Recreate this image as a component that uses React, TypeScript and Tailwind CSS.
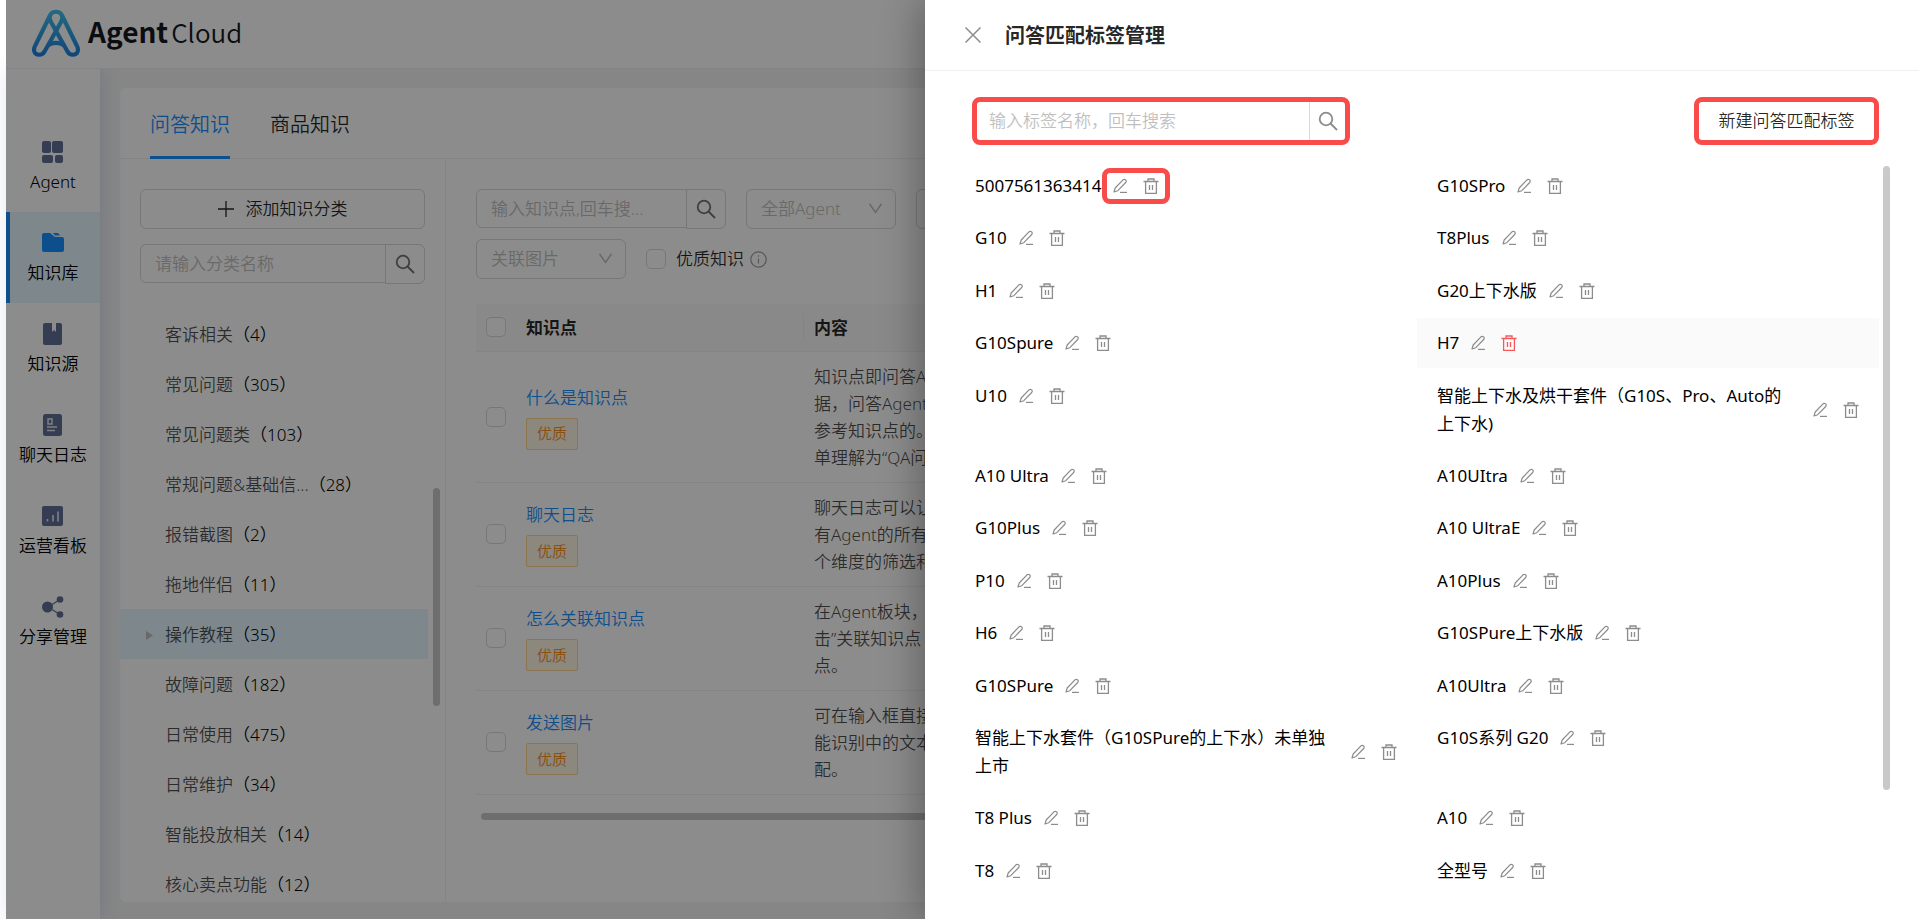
import type { ReactNode } from "react";

const navItems = [
  { label: "Agent", icon: "grid" },
  { label: "知识库", icon: "folder", active: true },
  { label: "知识源", icon: "book" },
  { label: "聊天日志", icon: "log" },
  { label: "运营看板", icon: "chart" },
  { label: "分享管理", icon: "share" },
];

const categories = [
  { name: "客诉相关", count: 4 },
  { name: "常见问题", count: 305 },
  { name: "常见问题类", count: 103 },
  { name: "常规问题&基础信...", count: 28 },
  { name: "报错截图", count: 2 },
  { name: "拖地伴侣", count: 11 },
  { name: "操作教程", count: 35, active: true },
  { name: "故障问题", count: 182 },
  { name: "日常使用", count: 475 },
  { name: "日常维护", count: 34 },
  { name: "智能投放相关", count: 14 },
  { name: "核心卖点功能", count: 12 },
];

const knowledge = [
  { title: "什么是知识点", lines: ["知识点即问答Agent", "据，问答Agent", "参考知识点的。", "单理解为“QA问答"] },
  { title: "聊天日志", lines: ["聊天日志可以让", "有Agent的所有", "个维度的筛选和"] },
  { title: "怎么关联知识点", lines: ["在Agent板块，", "击”关联知识点", "点。"] },
  { title: "发送图片", lines: ["可在输入框直接", "能识别中的文本", "配。"] },
];

// \u2060 keeps "上下水" on one line
const tags = [
  "5007561363414", "G10SPro",
  "G10", "T8Plus",
  "H1", "G20上下水版",
  "G10Spure", "H7",
  "U10", "智能上下水及烘干套件（G10S、Pro、Auto的上\u2060下\u2060水)",
  "A10 Ultra", "A10UItra",
  "G10Plus", "A10 UltraE",
  "P10", "A10Plus",
  "H6", "G10SPure上下水版",
  "G10SPure", "A10Ultra",
  "智能上下水套件（G10SPure的上下水）未单独上市", "G10S系列 G20",
  "T8 Plus", "A10",
  "T8", "全型号",
];

function Logo() {
  return (
    <svg width="50" height="48" viewBox="0 0 50 48" fill="none" stroke="url(#logo)" strokeWidth="4.2" strokeLinejoin="round">
      <defs>
        <linearGradient id="logo" x1="25" y1="0" x2="25" y2="48" gradientUnits="userSpaceOnUse">
          <stop stopColor="#45c3e8" />
          <stop offset="1" stopColor="#1b7ee0" />
        </linearGradient>
      </defs>
      <path d="M19 6.5C21 1.5 29 1.5 31 6.5C32 9 31 11 30 13L17.500 35.500L13.500 42.500C11 47 5 46.500 3.500 43C2.500 40.500 3 38.500 4.500 36Z" />
      <path d="M31 6.500L45.500 36C47 38.500 47.500 40.500 46.500 43C45 46.500 39 47 36.500 42.500L20 13C19 11 18 9 19 6.500" />
      <path d="M17 36.500C21 33 29 33 33 36.500" />
    </svg>
  );
}

function NavIcon({ name }: { name: string }) {
  const shapes: Record<string, ReactNode> = {
    grid: (
      <>
        <rect x="0" y="0" width="9" height="12" rx="2" />
        <rect x="10" y="0" width="11" height="12" rx="2" />
        <rect x="0" y="14" width="11" height="8" rx="2" />
        <rect x="13" y="14" width="8" height="8" rx="2" />
      </>
    ),
    folder: (
      <>
        <path d="M0 3a2 2 0 0 1 2-2h6l5 4h7a2 2 0 0 1 2 2v11a2 2 0 0 1-2 2H2a2 2 0 0 1-2-2z" />
        <path d="M11 1h5l2 2.500h-5z" />
      </>
    ),
    book: <path d="M3 0h7v9l2-2 2 2V0h4a2 2 0 0 1 2 2v18a2 2 0 0 1-2 2H3a2 2 0 0 1-2-2V2a2 2 0 0 1 2-2z" />,
    log: (
      <>
        <rect x="1" y="0" width="19" height="22" rx="2.500" />
        <path d="M6 5h4v5H6zM5 13h10M5 16.500h8" fill="none" stroke="#e8ecf5" strokeWidth="1.400" />
      </>
    ),
    chart: (
      <>
        <rect x="0" y="1" width="21" height="20" rx="2" />
        <path d="M5.500 14v2.500M11 10v6.500M16 6.500v10" fill="none" stroke="#e8ecf5" strokeWidth="1.600" />
      </>
    ),
    share: (
      <>
        <circle cx="5.500" cy="11" r="5.500" />
        <circle cx="18" cy="3.500" r="3.300" />
        <circle cx="18" cy="18.500" r="3.300" />
        <path d="M18 3.500L6 11l12 7.500" fill="none" stroke="currentColor" strokeWidth="1.200" />
      </>
    ),
  };
  return (
    <svg width="22" height="22" viewBox="0 0 22 22" fill="currentColor">
      {shapes[name]}
    </svg>
  );
}

function SearchIcon() {
  return (
    <svg width="20" height="20" viewBox="0 0 20 20" fill="none" stroke="currentColor" strokeWidth="1.800">
      <circle cx="8" cy="8" r="6.300" />
      <path d="M12.500 12.500L19 19" />
    </svg>
  );
}

function PencilIcon() {
  return (
    <svg width="16" height="16" viewBox="0 0 16 16" fill="none" stroke="currentColor" strokeWidth="1.200" strokeLinejoin="round">
      <path d="M1 14L2.200 10L10 1.800Q11.300 .7 12.700 1.900Q13.700 3.100 12.700 4.500L4.800 12.700Z" />
      <path d="M7 14.400h7" />
    </svg>
  );
}

function TrashIcon() {
  return (
    <svg width="16" height="16" viewBox="0 0 16 16" fill="none" stroke="currentColor" strokeWidth="1.300">
      <path d="M.5 3.500h15M2.600 3.500v11.900h10.800V3.500M5 3.500V1h6v2.500M6.500 7v5M9.500 7v5" />
    </svg>
  );
}

function SearchBox({ label, width }: { label: string; width: string }) {
  return (
    <div className={`flex h-10 ${width}`}>
      <input
        aria-label={label}
        placeholder={label}
        className="h-[39px] min-w-0 flex-1 rounded-l-md border border-[#d9d9d9] px-3.5 leading-7 placeholder:text-[#bfbfbf]"
      />
      <button aria-label="搜索" className="-ml-px flex w-10 items-center justify-center rounded-r-md border border-[#d9d9d9] text-[#737373]">
        <SearchIcon />
      </button>
    </div>
  );
}

function Select({ label }: { label: string }) {
  return (
    <div className="relative h-10 w-[150px] shrink-0">
      <select aria-label={label} className="h-full w-full appearance-none rounded-md border border-[#d9d9d9] px-3.5 text-[#bfbfbf]">
        <option>{label}</option>
      </select>
      <svg className="pointer-events-none absolute top-3.5 right-3.5 text-[#bfbfbf]" width="13" height="11" viewBox="0 0 13 11" fill="none" stroke="currentColor" strokeWidth="1.500">
        <path d="M.5 .8L6.500 9.500L12.500 .8" />
      </svg>
    </div>
  );
}

function Checkbox({ id, label }: { id?: string; label?: string }) {
  return (
    <input
      id={id}
      type="checkbox"
      aria-label={label}
      className="block size-5 shrink-0 appearance-none rounded-[5px] border border-[#d9d9d9] bg-white"
    />
  );
}

function Sidebar() {
  return (
    <nav className="z-10 w-[94px] shrink-0 bg-white pt-[52px] shadow-[2px_0_20px_rgba(60,90,150,0.16)]">
      {navItems.map((item) => (
        <a
          key={item.label}
          href="#"
          className={`flex h-[91px] flex-col items-center border-l-4 pt-5 pr-1 ${
            item.active ? "border-[#1890ff] bg-[#e6f7ff] text-[#1890ff]" : "border-transparent text-[#606f96]"
          }`}
        >
          <NavIcon name={item.icon} />
          <span className="mt-[5px] leading-7 text-black">{item.label}</span>
        </a>
      ))}
    </nav>
  );
}

function CategoryPanel() {
  return (
    <section className="flex w-[326px] shrink-0 flex-col border-r border-[#f0f0f0] pt-[30px]">
      <div className="flex flex-col gap-[15px] px-5">
        <button className="flex h-10 items-center justify-center gap-3 rounded-md border border-[#d9d9d9] text-black/85">
          <svg width="16" height="16" viewBox="0 0 16 16" stroke="currentColor" strokeWidth="1.300">
            <path d="M8 0v16M0 8h16" />
          </svg>
          添加知识分类
        </button>
        <SearchBox label="请输入分类名称" width="w-full" />
      </div>
      <div className="relative mt-[25px] min-h-0 flex-1 overflow-hidden">
        <ul className="mr-[17px]">
          {categories.map((c) => (
            <li key={c.name} className={`flex h-[50px] items-center pt-0.5 text-black ${c.active ? "bg-[#e6f7ff]" : ""}`}>
              <span className="flex w-[45px] justify-end pr-3 text-[#bfbfbf]">
                {c.active && (
                  <svg width="7" height="9" viewBox="0 0 7 9" fill="currentColor">
                    <path d="M0 0L7 4.500L0 9z" />
                  </svg>
                )}
              </span>
              <span className="text-black/70">{c.name}</span>
              <span>（{c.count}）</span>
            </li>
          ))}
        </ul>
        <div className="absolute top-[179px] right-[5px] h-[218px] w-[7px] rounded-full bg-[#c9c9c9]" />
      </div>
    </section>
  );
}

function KnowledgePanel() {
  return (
    <section className="min-w-0 flex-1 pt-[30px] pl-[30px]">
      <div className="flex gap-5">
        <SearchBox label="输入知识点,回车搜..." width="w-[250px]" />
        <Select label="全部Agent" />
        <Select label="全部状态" />
      </div>
      <div className="mt-2.5 flex items-center">
        <Select label="关联图片" />
        <span className="ml-5 flex items-center">
          <Checkbox id="quality" />
          <label htmlFor="quality" className="ml-2.5 text-black/85">优质知识</label>
        </span>
        <svg className="ml-1.5 text-[#a0a0a0]" width="17" height="17" viewBox="0 0 17 17" fill="none" stroke="currentColor" strokeWidth="1.200">
          <circle cx="8.500" cy="8.500" r="7.700" />
          <path d="M8.500 7.500v5M8.500 4.300v1.400" />
        </svg>
      </div>
      <table className="mt-[25px] w-full table-fixed border-collapse text-left">
        <thead>
          <tr className="h-[47px] border-b border-[#f0f0f0] bg-[#fafafa] text-black/85">
            <th className="w-10 pl-2.5"><Checkbox label="全选" /></th>
            <th className="w-[288px] pl-2.5 font-bold">
              <span className="flex h-7 items-center border-r border-[#f0f0f0]">知识点</span>
            </th>
            <th className="pl-2.5 font-bold">内容</th>
          </tr>
        </thead>
        <tbody>
          {knowledge.map((k) => (
            <tr key={k.title} className="border-b border-[#f0f0f0]">
              <td className="pl-2.5"><Checkbox label={k.title} /></td>
              <td className="pl-2.5">
                <a href="#" className="block leading-7 text-[#1890ff]">{k.title}</a>
                <span className="mt-1.5 flex h-8 w-[52px] items-center justify-center rounded-xs border border-[#ffd591] bg-[#fff7e6] text-[15px] text-[#fa8c16]">
                  优质
                </span>
              </td>
              <td className="py-[11px] pl-2.5 leading-[27px] whitespace-nowrap text-black/70">
                {k.lines.map((line) => (
                  <div key={line}>{line}</div>
                ))}
              </td>
            </tr>
          ))}
        </tbody>
      </table>
      <div className="mt-[18px] ml-[5px] h-[7px] rounded-l-full bg-[#c9c9c9]" />
    </section>
  );
}

function TagItem({ name, first, hovered }: { name: string; first: boolean; hovered: boolean }) {
  return (
    <li className={`flex items-center px-5 py-[11px] ${hovered ? "bg-[#fafafa]" : ""}`}>
      <span className="leading-7">{name}</span>
      <span
        className={`flex shrink-0 items-center gap-3.5 text-[#8c8c8c] ${
          first ? "-my-1 ml-px h-9 rounded-lg border-[5px] border-[#f94b49] px-1.5" : "ml-3"
        }`}
      >
        <button aria-label={`编辑 ${name}`}><PencilIcon /></button>
        <button aria-label={`删除 ${name}`} className={hovered ? "text-[#f5595c]" : ""}><TrashIcon /></button>
      </span>
    </li>
  );
}

function TagDrawer() {
  return (
    <aside className="absolute inset-y-0 right-0 flex w-[994px] flex-col bg-white shadow-[-6px_0_36px_rgba(0,0,0,0.3)]">
      <header className="flex h-[71px] shrink-0 items-center border-b border-[#f0f0f0] pl-10">
        <button aria-label="关闭" className="text-[#8c8c8c]">
          <svg width="16" height="16" viewBox="0 0 16 16" stroke="currentColor" strokeWidth="1.500">
            <path d="M.5 .5l15 15M15.500 .5l-15 15" />
          </svg>
        </button>
        <h2 className="ml-6 pt-0.5 text-xl font-bold text-black/85">问答匹配标签管理</h2>
      </header>
      <div className="mt-[26px] mr-10 ml-[47px] flex h-12 shrink-0 justify-between">
        <div className="flex w-[378px] rounded-lg border-[5px] border-[#f94b49]">
          <input
            aria-label="输入标签名称，回车搜索"
            placeholder="输入标签名称，回车搜索"
            className="min-w-0 flex-1 px-3 leading-7 placeholder:text-[#bfbfbf]"
          />
          <button aria-label="搜索" className="flex w-[36px] items-center justify-center border-l border-[#d9d9d9] text-[#8c8c8c]">
            <SearchIcon />
          </button>
        </div>
        <button className="w-[185px] rounded-lg border-[5px] border-[#f94b49] text-black/85">新建问答匹配标签</button>
      </div>
      <div className="mt-4 mb-[23px] flex min-h-0 flex-1 pl-[30px]">
        <ul className="grid flex-1 grid-cols-2 content-between items-start font-normal">
          {tags.map((name, i) => (
            <TagItem key={i} name={name} first={i === 0} hovered={name === "H7"} />
          ))}
        </ul>
        <div className="mt-[5px] mr-[29px] ml-1 h-[624px] w-[7px] shrink-0 rounded-full bg-[#c9c9c9]" />
      </div>
    </aside>
  );
}

export default function App() {
  return (
    <div className="relative flex h-screen flex-col overflow-hidden bg-white pl-1.5 font-['Noto_Sans','Noto_Sans_CJK_SC',sans-serif] text-[17px] font-[350] text-black">
      <header className="z-20 flex h-[69px] shrink-0 items-center border-b border-[#f0f0f0] bg-white pb-0.5 pl-[25px]">
        <Logo />
        <h1 className="ml-[7px] flex items-baseline gap-[3px] pb-1 font-['Noto_Sans_CJK_SC',sans-serif] text-[28px] text-[#14181f]">
          <span className="font-bold">Agent</span>
          <span className="text-[26px]">Cloud</span>
        </h1>
      </header>
      <div className="flex min-h-0 flex-1">
        <Sidebar />
        <main className="flex min-w-0 flex-1 flex-col bg-[#f4f5f6] pt-[19px] pb-[17px] pl-5">
          <div className="flex min-h-0 flex-1 flex-col rounded-md bg-white">
            <div className="flex h-[71px] shrink-0 gap-10 border-b border-[#f0f0f0] pl-[30px] text-xl">
              <button className="-mb-px border-b-3 border-[#1890ff] pt-1.5 text-[#1890ff]">问答知识</button>
              <button className="-mb-px border-b-3 border-transparent pt-1.5 text-black/85">商品知识</button>
            </div>
            <div className="flex min-h-0 flex-1">
              <CategoryPanel />
              <KnowledgePanel />
            </div>
          </div>
        </main>
      </div>
      <div className="absolute inset-y-0 right-0 left-1.5 z-30 bg-black/45">
        <TagDrawer />
      </div>
    </div>
  );
}
